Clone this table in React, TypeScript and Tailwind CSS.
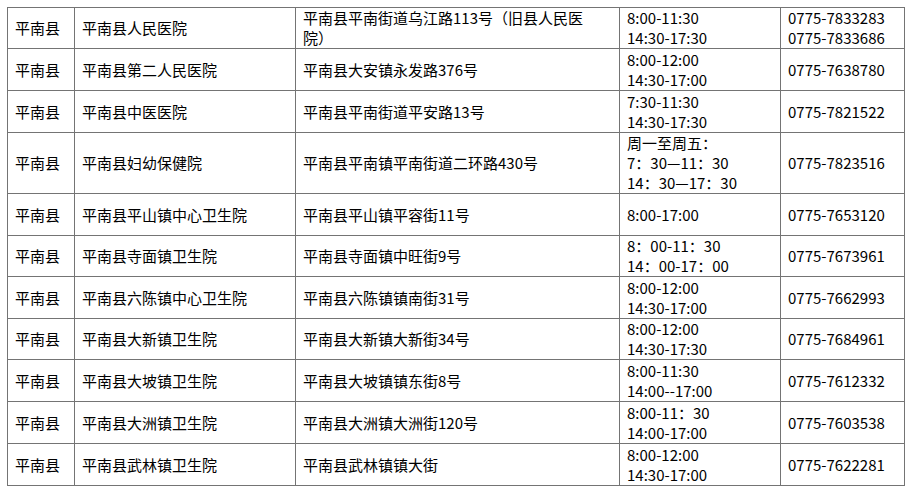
import React from "react"

interface Clinic {
  county: string
  name: string
  address: React.ReactNode
  hours: string[]
  phones: string[]
  h: string
}

const clinics: Clinic[] = [
  {
    county: "平南县",
    name: "平南县人民医院",
    address: (
      <>
        平南县平南街道乌江路113号（旧县人民医
        <br />
        院）
      </>
    ),
    hours: ["8:00-11:30", "14:30-17:30"],
    phones: ["0775-7833283", "0775-7833686"],
    h: "h-[41px]",
  },
  { county: "平南县", name: "平南县第二人民医院", address: "平南县大安镇永发路376号", hours: ["8:00-12:00", "14:30-17:00"], phones: ["0775-7638780"], h: "h-[42px]" },
  { county: "平南县", name: "平南县中医医院", address: "平南县平南街道平安路13号", hours: ["7:30-11:30", "14:30-17:30"], phones: ["0775-7821522"], h: "h-[42px]" },
  {
    county: "平南县",
    name: "平南县妇幼保健院",
    address: "平南县平南镇平南街道二环路430号",
    hours: ["周一至周五：", "7：30—11：30", "14：30—17：30"],
    phones: ["0775-7823516"],
    h: "h-[61px]",
  },
  { county: "平南县", name: "平南县平山镇中心卫生院", address: "平南县平山镇平容街11号", hours: ["8:00-17:00"], phones: ["0775-7653120"], h: "h-[42px]" },
  { county: "平南县", name: "平南县寺面镇卫生院", address: "平南县寺面镇中旺街9号", hours: ["8：00-11：30", "14：00-17：00"], phones: ["0775-7673961"], h: "h-[41px]" },
  { county: "平南县", name: "平南县六陈镇中心卫生院", address: "平南县六陈镇镇南街31号", hours: ["8:00-12:00", "14:30-17:00"], phones: ["0775-7662993"], h: "h-[42px]" },
  { county: "平南县", name: "平南县大新镇卫生院", address: "平南县大新镇大新街34号", hours: ["8:00-12:00", "14:30-17:30"], phones: ["0775-7684961"], h: "h-[41px]" },
  { county: "平南县", name: "平南县大坡镇卫生院", address: "平南县大坡镇镇东街8号", hours: ["8:00-11:30", "14:00--17:00"], phones: ["0775-7612332"], h: "h-[42px]" },
  { county: "平南县", name: "平南县大洲镇卫生院", address: "平南县大洲镇大洲街120号", hours: ["8:00-11：30", "14:00-17:00"], phones: ["0775-7603538"], h: "h-[42px]" },
  { county: "平南县", name: "平南县武林镇卫生院", address: "平南县武林镇镇大街", hours: ["8:00-12:00", "14:30-17:00"], phones: ["0775-7622281"], h: "h-[42px]" },
]

const cell = "border border-[#747474] px-[7px] align-middle"

export default function App() {
  return (
    <div
      className="bg-white w-[909px] h-[493px] pt-[7px] pl-[7px] text-[15px] leading-[20px] text-black"
      style={{ fontFamily: '"Noto Sans CJK SC", "Noto Sans", sans-serif' }}
    >
      <table className="table-fixed border-collapse w-[897px]">
        <colgroup>
          <col className="w-[67px]" />
          <col className="w-[221px]" />
          <col className="w-[324px]" />
          <col className="w-[161px]" />
          <col className="w-[124px]" />
        </colgroup>
        <tbody>
          {clinics.map((c, i) => (
            <tr key={i} className={c.h}>
              <td className={cell}>{c.county}</td>
              <td className={cell}>{c.name}</td>
              <td className={cell}>{c.address}</td>
              <td className={cell}>
                {c.hours.map((t, j) => (
                  <div key={j}>{t}</div>
                ))}
              </td>
              <td className={cell}>
                {c.phones.map((p, j) => (
                  <div key={j}>{p}</div>
                ))}
              </td>
            </tr>
          ))}
        </tbody>
      </table>
    </div>
  )
}
